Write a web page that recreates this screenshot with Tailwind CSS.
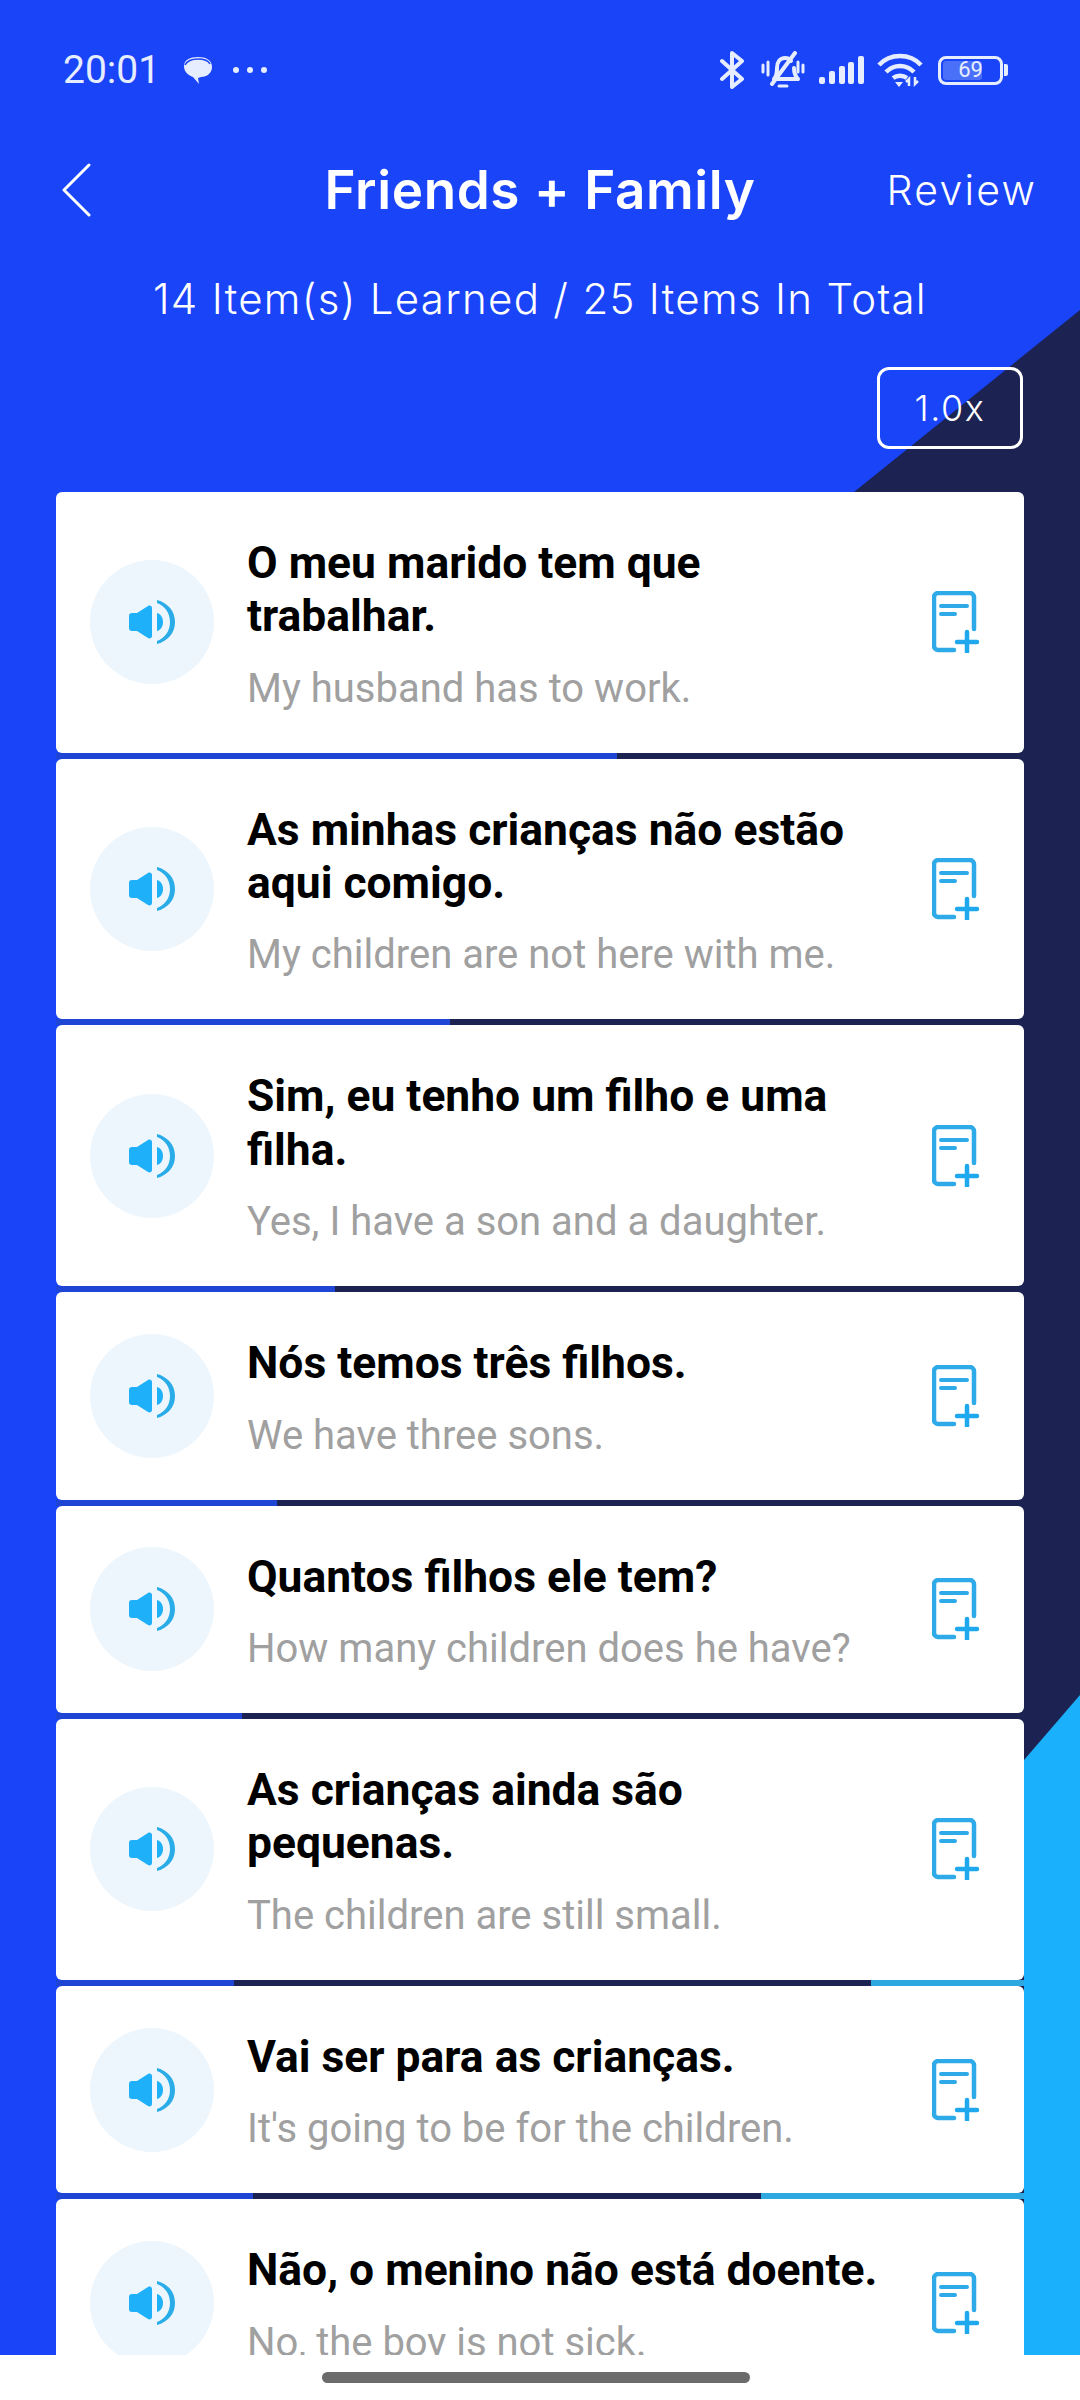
<!DOCTYPE html>
<html lang="pt">
<head>
    <meta charset="UTF-8">
    <meta name="viewport" content="width=device-width, initial-scale=1.0">
    <title>Friends + Family</title>
    <script src="https://cdn.jsdelivr.net/npm/@tailwindcss/browser@4"></script>
</head>
<body class="bg-white font-['Roboto',sans-serif]">
<div class="w-[1080px] h-[2400px] flex flex-col">

    <!-- Blue page with the diagonal backdrop -->
    <div class="relative h-[2355px] overflow-hidden bg-[#1a44f8]">
        <svg class="absolute inset-0" width="1080" height="2355">
            <polygon points="1080,310 854,492 854,2355 1080,2355" fill="#1c2252"/>
            <polygon points="1080,1695 1024,1760 1024,2355 1080,2355" fill="#1bb0fc"/>
        </svg>

        <div class="relative">
            <!-- Status bar -->
            <div class="h-[140px] flex items-center pl-[63px] text-[#e6edff]">
                <span class="text-[39px] leading-none w-[120px]">20:01</span>
                <svg width="32" height="32" viewBox="0 0 32 32" class="-ml-[1px]">
                    <path d="M2 12C2 6 8 3 16 3s14 3 14 10c0 6-5 10-11 10l-3 1 1 6-6-7C6 21 2 18 2 12z" fill="#e6edff"/>
                    <path d="M3 9C5 5 10 3 16 3c6 0 10 1 12 5" fill="none" stroke="#1a44f8" stroke-width="1.5" transform="translate(0 2)"/>
                </svg>
                <div class="flex gap-[8px] ml-[19px]">
                    <span class="w-[6px] h-[6px] rounded-full bg-[#e6edff]"></span>
                    <span class="w-[6px] h-[6px] rounded-full bg-[#e6edff]"></span>
                    <span class="w-[6px] h-[6px] rounded-full bg-[#e6edff]"></span>
                </div>
                <div class="ml-auto mr-[72px] flex items-center">
                    <!-- bluetooth -->
                    <svg width="26" height="38" viewBox="0 0 26 38" fill="none" stroke="#e6edff" stroke-width="4" stroke-linejoin="round" stroke-linecap="round">
                        <path d="M3 10l20 18-10 8V2l10 8L3 28"/>
                    </svg>
                    <!-- muted bell -->
                    <svg width="44" height="38" viewBox="0 0 44 38" fill="none" stroke="#e6edff" stroke-width="4" stroke-linecap="round" stroke-linejoin="round" class="ml-[16px]">
                        <path d="M13 28c3-3 3-6 3-11 0-6 3-10 8-10 3 0 5 1 6 3M33 17c0 4 1 8 4 11H13"/>
                        <path d="M11 33L34 2"/>
                        <path d="M18 35h8" stroke-width="3"/>
                        <path d="M2 14v7M7 11v13M37 11v10M42 14v7" stroke-width="3"/>
                    </svg>
                    <!-- signal -->
                    <svg width="45" height="28" viewBox="0 0 45 28" fill="#e6edff" class="ml-[14px]">
                        <rect x="0" y="21" width="6" height="7" rx="2"/>
                        <rect x="10" y="15" width="6" height="13" rx="2"/>
                        <rect x="20" y="10" width="6" height="18" rx="2"/>
                        <rect x="29" y="6" width="6" height="22" rx="2"/>
                        <rect x="39" y="0" width="6" height="28" rx="2"/>
                    </svg>
                    <!-- wifi with arrows -->
                    <svg width="46" height="34" viewBox="0 0 46 34" fill="none" stroke="#e6edff" stroke-width="4.5" class="ml-[13px]">
                        <path d="M2 12C13 0 33 0 44 12"/>
                        <path d="M9 19c8-8 20-8 28 0"/>
                        <path d="M16 25c4-3 10-3 14 0"/>
                        <path d="M18 29h8l-4 5z" fill="#e6edff" stroke="none"/>
                        <path d="M32 33v-7l-3 3M38 24v7l3-3" stroke-width="2.5"/>
                    </svg>
                    <!-- battery -->
                    <div class="relative ml-[15px] w-[65px] h-[29px] border-[3px] border-[#e6edff] rounded-[8px] p-[2px]">
                        <div class="w-[39px] h-full rounded-[3px] bg-[#4a70fa]"></div>
                        <span class="absolute inset-0 flex items-center justify-center text-[22px] leading-none text-[#e6edff]">69</span>
                    </div>
                    <div class="ml-[1px] w-[4px] h-[12px] rounded-r-[2px] bg-[#e6edff]"></div>
                </div>
            </div>

            <!-- Header -->
            <div class="h-[100px] grid grid-cols-[1fr_auto_1fr] items-center text-white font-['Inter',sans-serif]">
                <svg width="30" height="54" viewBox="0 0 30 54" fill="none" stroke="#fff" stroke-width="3" stroke-linecap="round" stroke-linejoin="round" class="ml-[61px]">
                    <path d="M28 2L3 27l25 25"/>
                </svg>
                <span class="text-[53px] font-semibold leading-none tracking-[0.6px]">Friends + Family</span>
                <span class="text-[41px] font-light leading-none tracking-[2.2px] justify-self-end mr-[43px]">Review</span>
            </div>

            <!-- Progress text -->
            <div class="h-[116px] flex items-center justify-center text-white text-[42px] font-light tracking-[1.3px] font-['Inter',sans-serif]">14 Item(s) Learned / 25 Items In Total</div>

            <!-- Speed button -->
            <div class="mt-[11px] flex justify-end pr-[57px]">
                <div class="w-[146px] h-[82px] border-[3px] border-white rounded-[12px] flex items-center justify-center text-white text-[36px] font-light tracking-[1.5px] font-['Inter',sans-serif]">1.0x</div>
            </div>

            <!-- Phrases -->
            <div id="phraseList" class="mt-[43px] w-[968px] ml-[56px]"></div>
        </div>
    </div>

    <!-- Gesture bar -->
    <div class="flex-1 bg-white pt-[17px] pl-[322px]">
        <div class="w-[428px] h-[11px] rounded-full bg-[#6b6b6b]"></div>
    </div>
</div>

<script>
    // blue = where the blue part of the strip under a card ends, navy = where the navy part ends
    const phrases = [
        { title: "O meu marido tem que trabalhar.", sub: "My husband has to work.", blue: 561, navy: 968 },
        { title: "As minhas crianças não estão aqui comigo.", sub: "My children are not here with me.", blue: 394, navy: 968 },
        { title: "Sim, eu tenho um filho e uma filha.", sub: "Yes, I have a son and a daughter.", blue: 279, navy: 968 },
        { title: "Nós temos três filhos.", sub: "We have three sons.", blue: 221, navy: 968 },
        { title: "Quantos filhos ele tem?", sub: "How many children does he have?", blue: 186, navy: 968 },
        { title: "As crianças ainda são pequenas.", sub: "The children are still small.", blue: 178, navy: 815 },
        { title: "Vai ser para as crianças.", sub: "It's going to be for the children.", blue: 197, navy: 705 },
        { title: "Não, o menino não está doente.", sub: "No, the boy is not sick.", blue: 0, navy: 0 }
    ];

    document.getElementById("phraseList").innerHTML = phrases.map(p => `
        <div class="bg-white rounded-[6px] flex items-center pl-[34px]">
            <div class="w-[124px] h-[124px] shrink-0 rounded-full bg-[#edf6fc] flex items-center justify-center">
                <svg width="46" height="46" viewBox="0 0 46 46">
                    <path d="M0 17c0-2 1-3 3-3h5L19 7c2-1 4 0 4 2v28c0 2-2 3-4 2L8 32H3c-2 0-3-1-3-3z" fill="#1fb0fa"/>
                    <path d="M28 14c4 1 6 5 6 9s-2 8-6 9z" fill="#1fb0fa"/>
                    <path d="M28 1c11 3 18 11 18 22s-7 19-18 22v-3c8-3 13-10 13-19S36 7 28 4z" fill="#2aace8"/>
                </svg>
            </div>
            <div class="w-[640px] ml-[33px] pt-[45px] pb-[39.15px]">
                <p class="text-[44.4px] leading-[53.3px] font-bold text-black">${p.title}</p>
                <p class="mt-[20px] text-[40px] leading-[50px] text-[#a0a0a0]">${p.sub}</p>
            </div>
            <svg width="48" height="62" viewBox="0 0 48 62" fill="none" stroke="#2eaae8" stroke-width="4.5" stroke-linecap="round" class="ml-[45px] shrink-0">
                <path d="M22 59H6c-2 0-4-2-4-4V6c0-2 2-4 4-4h32c2 0 4 2 4 4v32"/>
                <path d="M9 15h26M9 23h14" stroke-width="4"/>
                <path d="M25 51h20M35 41v20" stroke="#1fa8ee"/>
            </svg>
        </div>
        ${p.blue ? `<div class="h-[6px] flex bg-[#2ea8e0]">
            <div class="bg-[#1f45d4]" style="width:${p.blue}px"></div>
            <div class="bg-[#1c2252]" style="width:${p.navy - p.blue}px"></div>
        </div>` : ""}
    `).join("");
</script>
</body>
</html>
